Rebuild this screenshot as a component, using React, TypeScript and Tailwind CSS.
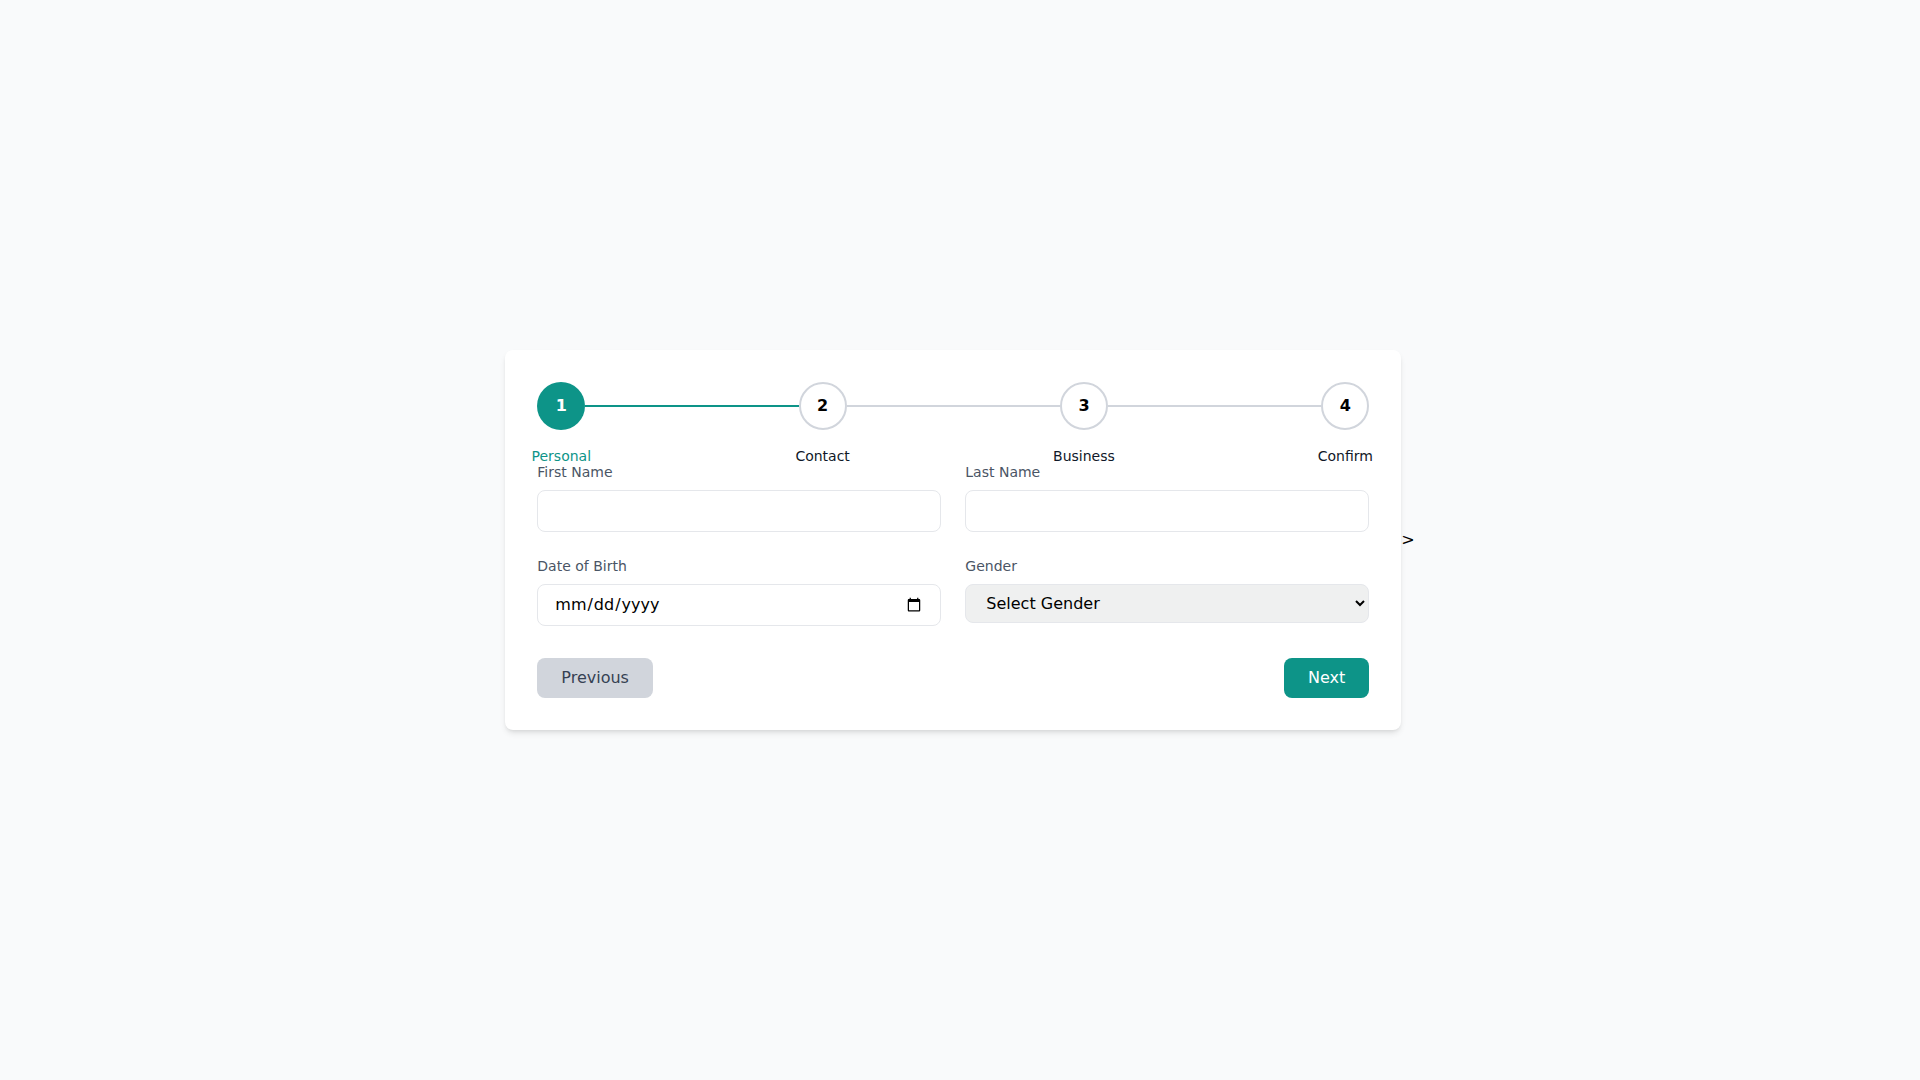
import React, { useState } from 'react';

const steps = ['Personal', 'Contact', 'Business', 'Confirm'];

export default function App() {
  const [current, setCurrent] = useState(0);

  return (
    <div
      className="min-h-screen bg-gray-50 flex items-center justify-center"
      style={{ fontFamily: '"DejaVu Sans", sans-serif' }}
    >
      <div className="w-[896px] bg-white rounded-lg shadow-md p-8">
        {/* stepper */}
        <div className="flex items-center mb-8">
          {steps.map((label, i) => (
            <React.Fragment key={label}>
              <div className="relative flex flex-col items-center">
                <div
                  className={
                    i <= current
                      ? 'w-12 h-12 rounded-full bg-[#0d9488] text-white font-bold flex items-center justify-center'
                      : 'w-12 h-12 rounded-full bg-white border-2 border-gray-300 text-black font-bold flex items-center justify-center'
                  }
                >
                  {i + 1}
                </div>
                <span
                  className={
                    i <= current
                      ? 'absolute top-16 text-sm text-[#0d9488] whitespace-nowrap leading-5'
                      : 'absolute top-16 text-sm text-gray-900 whitespace-nowrap leading-5'
                  }
                >
                  {label}
                </span>
              </div>
              {i < steps.length - 1 && (
                <div className={i < current + 1 && i === current ? 'flex-1 h-0.5 bg-[#0d9488]' : 'flex-1 h-0.5 bg-gray-300'} />
              )}
            </React.Fragment>
          ))}
        </div>

        {/* form */}
        <div className="grid grid-cols-2 gap-6">
          <div>
            <label className="block text-sm text-gray-600 mb-2">First Name</label>
            <input type="text" className="w-full px-4 py-2 border border-gray-200 rounded-lg text-base outline-none" />
          </div>
          <div>
            <label className="block text-sm text-gray-600 mb-2">Last Name</label>
            <input type="text" className="w-full px-4 py-2 border border-gray-200 rounded-lg text-base outline-none" />
          </div>
          <div>
            <label className="block text-sm text-gray-600 mb-2">Date of Birth</label>
            <input type="date" className="w-full px-4 py-2 border border-gray-200 rounded-lg text-base outline-none" />
          </div>
          <div>
            <label className="block text-sm text-gray-600 mb-2">Gender</label>
            <select className="w-full px-4 py-2 border border-gray-200 rounded-lg text-base bg-[#eff0f0] text-black outline-none">
              <option>Select Gender</option>
              <option>Male</option>
              <option>Female</option>
              <option>Other</option>
            </select>
          </div>
        </div>

        <div className="flex justify-between mt-8">
          <button
            onClick={() => setCurrent(Math.max(0, current - 1))}
            className="px-6 py-2 rounded-lg bg-gray-300 text-gray-700"
          >
            Previous
          </button>
          <button
            onClick={() => setCurrent(Math.min(steps.length - 1, current + 1))}
            className="px-6 py-2 rounded-lg bg-[#0d9488] text-white"
          >
            Next
          </button>
        </div>
      </div>
      &gt;
    </div>
  );
}
